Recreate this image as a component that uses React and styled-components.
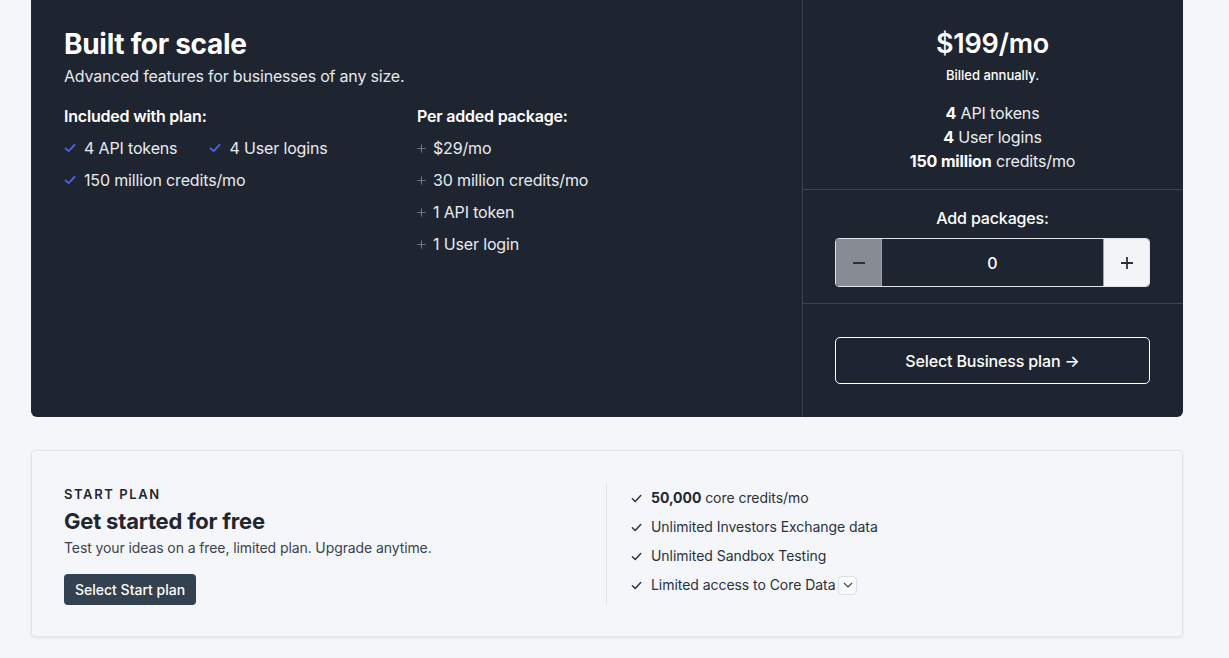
import React from "react";
import styled, { createGlobalStyle } from "styled-components";

const Global = createGlobalStyle`
  html, body { margin: 0; padding: 0; background: #f5f6fa; }
  body { font-family: Inter, "Noto Sans", sans-serif; color: #1f2630; -webkit-font-smoothing: antialiased; }
  * { box-sizing: border-box; }
`;

const Page = styled.div`
  width: 1152px;
  margin-left: 31px;
  display: flex;
  flex-direction: column;
  gap: 33px;
`;

const DarkCard = styled.section`
  background: #1f2530;
  border-radius: 0 0 6px 6px;
  display: grid;
  grid-template-columns: 1fr 381px;
  color: #fff;
  height: 417px;
`;

const Main = styled.div`
  padding: 27px 33px;
`;

const Title = styled.h2`
  margin: 0;
  font-size: 28px;
  line-height: 34px;
  font-weight: 700;
  letter-spacing: -0.3px;
`;

const Sub = styled.p`
  margin: 3px 0 0;
  font-size: 16px;
  line-height: 24px;
  letter-spacing: -0.2px;
  color: #e6e8ec;
`;

const Cols = styled.div`
  display: grid;
  grid-template-columns: 353px 1fr;
  margin-top: 16px;
`;

const ColHead = styled.div`
  font-size: 16px;
  line-height: 24px;
  font-weight: 600;
  letter-spacing: -0.2px;
`;

const Items = styled.ul`
  list-style: none;
  margin: 8px 0 0;
  padding: 0;
  display: flex;
  flex-wrap: wrap;
  flex-direction: ${(p) => (p.$stack ? "column" : "row")};
  column-gap: 32px;
  row-gap: 8px;
`;

const Item = styled.li`
  display: flex;
  align-items: center;
  gap: ${(p) => p.$gap || 8}px;
  font-size: 16px;
  line-height: 24px;
  letter-spacing: -0.15px;
  color: #e9ebef;
`;

const Side = styled.aside`
  border-left: 1px solid #3a4350;
  display: flex;
  flex-direction: column;
`;

const SideSection = styled.div`
  padding: ${(p) => p.$pad};
  border-bottom: ${(p) => (p.$last ? "none" : "1px solid #3a4554")};
  display: flex;
  flex-direction: column;
  align-items: center;
  text-align: center;
  flex: ${(p) => (p.$last ? 1 : "none")};
`;

const Price = styled.div`
  font-size: 27px;
  line-height: 32px;
  font-weight: 600;
  letter-spacing: -0.2px;
`;

const Billed = styled.div`
  margin-top: 6px;
  font-size: 13px;
  line-height: 18px;
  font-weight: 500;
`;

const Facts = styled.div`
  margin-top: 17px;
  font-size: 16px;
  line-height: 24px;
  letter-spacing: -0.15px;
  color: #eceef2;
  b { font-weight: 700; color: #fff; }
`;

const AddLabel = styled.div`
  font-size: 16px;
  line-height: 24px;
  font-weight: 500;
  letter-spacing: -0.15px;
`;

const Stepper = styled.div`
  margin-top: 8px;
  width: 315px;
  height: 49px;
  border: 1px solid #dfe2e8;
  border-radius: 4px;
  overflow: hidden;
  display: grid;
  grid-template-columns: 46px 1fr 46px;
`;

const StepBtn = styled.button`
  border: none;
  margin: 0;
  padding: 0;
  display: flex;
  align-items: center;
  justify-content: center;
  background: ${(p) => (p.$disabled ? "#878c94" : "#f3f4f8")};
  border-right: ${(p) => (p.$disabled ? "1px solid #9aa3b0" : "none")};
  border-left: ${(p) => (p.$disabled ? "none" : "1px solid #9aa3b0")};
  color: #1f2630;
`;

const StepValue = styled.div`
  display: flex;
  align-items: center;
  justify-content: center;
  font-size: 16px;
  font-weight: 500;
  color: #fff;
  background: #1f2530;
`;

const OutlineBtn = styled.button`
  width: 315px;
  height: 47px;
  border: 1px solid #fff;
  border-radius: 5px;
  background: transparent;
  color: #fff;
  font-family: inherit;
  font-size: 16px;
  font-weight: 500;
  letter-spacing: -0.15px;
`;

const LightCard = styled.section`
  background: #f5f6fa;
  border: 1px solid #e1e3e9;
  border-radius: 4px;
  box-shadow: 0 1px 3px rgba(0, 0, 0, 0.08);
  padding: 32px 32px 31px;
  display: grid;
  grid-template-columns: 542px 1fr;
  margin-bottom: 20px;
`;

const StartLeft = styled.div`
  display: flex;
  flex-direction: column;
  align-items: flex-start;
`;

const Eyebrow = styled.div`
  font-size: 13px;
  line-height: 20px;
  font-weight: 600;
  letter-spacing: 1.6px;
  color: #1f2630;
  margin-top: 1px;
`;

const StartTitle = styled.h3`
  margin: 3px 0 0;
  font-size: 22px;
  line-height: 28px;
  font-weight: 700;
  letter-spacing: -0.2px;
`;

const StartDesc = styled.p`
  margin: 3px 0 0;
  font-size: 14px;
  line-height: 20px;
  letter-spacing: -0.1px;
  color: #3a4350;
`;

const DarkBtn = styled.button`
  margin-top: 16px;
  height: 31px;
  padding: 0 11px;
  border: none;
  border-radius: 4px;
  background: #344150;
  color: #fff;
  font-family: inherit;
  font-size: 14px;
  font-weight: 500;
`;

const StartList = styled.ul`
  list-style: none;
  margin: 0;
  padding: 5px 0 0 24px;
  border-left: 1px solid #e1e3e9;
  display: flex;
  flex-direction: column;
  gap: 9px;
`;

const StartItem = styled.li`
  display: flex;
  align-items: center;
  gap: 9px;
  font-size: 14px;
  line-height: 20px;
  letter-spacing: -0.05px;
  color: #2a313b;
  b { font-weight: 700; color: #1f2630; }
`;

const ItemText = styled.span`
  display: inline-flex;
  align-items: center;
`;

const Chevron = styled.span`
  display: inline-flex;
  align-items: center;
  justify-content: center;
  width: 19px;
  height: 19px;
  margin-left: 3px;
  border: 1px solid #dcdfe6;
  border-radius: 4px;
  background: #fafbfd;
`;

const Check = ({ color = "#4d62f2", size = 12, w = 1.8 }) => (
  <svg width={size} height={size} viewBox="0 0 12 12" fill="none">
    <path d="M1.5 6.3 L4.6 9.2 L10.6 2.8" stroke={color} strokeWidth={w} strokeLinecap="round" strokeLinejoin="round" />
  </svg>
);

const Plus = ({ color = "#6f7784", size = 9, w = 1.2 }) => (
  <svg width={size} height={size} viewBox="0 0 10 10" fill="none">
    <path d="M5 0.5 V9.5 M0.5 5 H9.5" stroke={color} strokeWidth={w} />
  </svg>
);

export default function App() {
  return (
    <>
      <Global />
      <Page>
        <DarkCard>
          <Main>
            <Title>Built for scale</Title>
            <Sub>Advanced features for businesses of any size.</Sub>
            <Cols>
              <div>
                <ColHead>Included with plan:</ColHead>
                <Items>
                  <Item><Check />4 API tokens</Item>
                  <Item><Check />4 User logins</Item>
                  <Item><Check />150 million credits/mo</Item>
                </Items>
              </div>
              <div>
                <ColHead>Per added package:</ColHead>
                <Items $stack>
                  <Item $gap={7}><Plus />$29/mo</Item>
                  <Item $gap={7}><Plus />30 million credits/mo</Item>
                  <Item $gap={7}><Plus />1 API token</Item>
                  <Item $gap={7}><Plus />1 User login</Item>
                </Items>
              </div>
            </Cols>
          </Main>
          <Side>
            <SideSection $pad="28px 33px 16px 32px">
              <Price>$199/mo</Price>
              <Billed>Billed annually.</Billed>
              <Facts>
                <div><b>4</b> API tokens</div>
                <div><b>4</b> User logins</div>
                <div><b>150 million</b> credits/mo</div>
              </Facts>
            </SideSection>
            <SideSection $pad="16px 33px 16px 32px">
              <AddLabel>Add packages:</AddLabel>
              <Stepper>
                <StepBtn $disabled aria-label="Remove package">
                  <svg width="14" height="14" viewBox="0 0 14 14"><path d="M1 7 H13" stroke="#2a313b" strokeWidth="1.8" /></svg>
                </StepBtn>
                <StepValue>0</StepValue>
                <StepBtn aria-label="Add package">
                  <svg width="14" height="14" viewBox="0 0 14 14"><path d="M7 1 V13 M1 7 H13" stroke="#2a313b" strokeWidth="1.8" /></svg>
                </StepBtn>
              </Stepper>
            </SideSection>
            <SideSection $pad="33px 33px 0 32px" $last>
              <OutlineBtn>Select Business plan →</OutlineBtn>
            </SideSection>
          </Side>
        </DarkCard>
        <LightCard>
          <StartLeft>
            <Eyebrow>START PLAN</Eyebrow>
            <StartTitle>Get started for free</StartTitle>
            <StartDesc>Test your ideas on a free, limited plan. Upgrade anytime.</StartDesc>
            <DarkBtn>Select Start plan</DarkBtn>
          </StartLeft>
          <StartList>
            <StartItem><Check color="#2a313b" size={11} w={1.6} /><span><b>50,000</b> core credits/mo</span></StartItem>
            <StartItem><Check color="#2a313b" size={11} w={1.6} />Unlimited Investors Exchange data</StartItem>
            <StartItem><Check color="#2a313b" size={11} w={1.6} />Unlimited Sandbox Testing</StartItem>
            <StartItem>
              <Check color="#2a313b" size={11} w={1.6} />
              <ItemText>
                Limited access to Core Data
                <Chevron>
                  <svg width="10" height="6" viewBox="0 0 10 6" fill="none"><path d="M1 1 L5 5 L9 1" stroke="#3a4350" strokeWidth="1.2" /></svg>
                </Chevron>
              </ItemText>
            </StartItem>
          </StartList>
        </LightCard>
      </Page>
    </>
  );
}
